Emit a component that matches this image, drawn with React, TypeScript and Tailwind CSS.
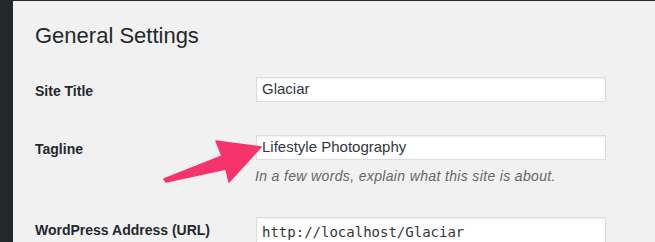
export default function App() {
  return (
    <div
      className="relative flex h-[242px] w-[655px] overflow-hidden bg-[#f1f1f1] text-[#23282d]"
      style={{ fontFamily: '"Liberation Sans", Arial, sans-serif' }}
    >
      {/* admin menu strip */}
      <div className="w-[13px] shrink-0 bg-[#23282d]" />

      <div className="flex flex-1 flex-col border-t border-[#23282d] pl-[22px]">
        <h1 className="mt-[21px] h-[28px] text-[22px] leading-[28px] font-normal">General Settings</h1>

        {/* Site Title */}
        <div className="mt-[27px] flex items-center">
          <label className="w-[221px] pt-[3px] text-[14px] font-bold">Site Title</label>
          <div className="flex h-[25px] w-[350px] items-center border border-[#ddd] bg-white pl-[5px] text-[15px] text-[#32373c] shadow-[inset_0_1px_2px_rgba(0,0,0,0.07)]">
            Glaciar
          </div>
        </div>

        {/* Tagline */}
        <div className="mt-[33px] flex items-center">
          <label className="w-[221px] pt-[3px] text-[14px] font-bold">Tagline</label>
          <div className="flex h-[25px] w-[350px] items-center border border-[#ddd] bg-white pl-[5px] text-[15px] text-[#32373c] shadow-[inset_0_1px_2px_rgba(0,0,0,0.07)]">
            Lifestyle Photography
          </div>
        </div>
        <p className="mt-[7px] ml-[220px] h-[18px] text-[14px] leading-[18px] tracking-[0.35px] italic text-[#666]">
          In a few words, explain what this site is about.
        </p>

        {/* WordPress Address */}
        <div className="mt-[32px] flex items-start">
          <label className="mt-[3px] w-[221px] text-[14px] font-bold">WordPress Address (URL)</label>
          <div
            className="flex h-[30px] w-[350px] items-center border border-[#ddd] bg-white pl-[5px] text-[14px] text-[#32373c] shadow-[inset_0_1px_2px_rgba(0,0,0,0.07)]"
            style={{ fontFamily: '"DejaVu Sans Mono", "Liberation Mono", monospace' }}
          >
            http://localhost/Glaciar
          </div>
        </div>
      </div>

      {/* annotation arrow */}
      <svg className="pointer-events-none absolute inset-0" width="655" height="242" viewBox="0 0 655 242">
        <polygon
          points="164,179 222,156 216,141 261,147 229,182 226,169 166,182"
          fill="#f7336b"
          stroke="#f7336b"
          strokeWidth="1.5"
          strokeLinejoin="round"
        />
      </svg>
    </div>
  );
}
